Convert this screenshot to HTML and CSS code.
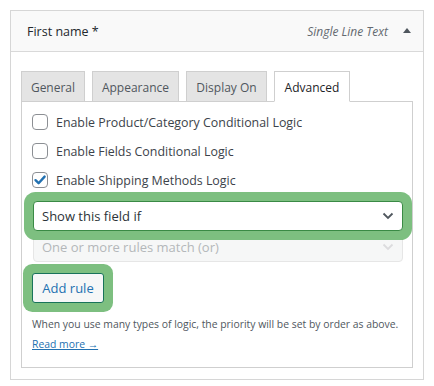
FILE: index.html
```html
<!DOCTYPE html>
<html>
<head>
<meta charset="utf-8">
<link rel="stylesheet" href="styles.css">
</head>
<body>
<div class="card">
  <div class="card-head">
    <span class="field-name">First name *</span>
    <span class="head-right">
      <span class="field-type">Single Line Text</span>
      <svg class="toggle" width="8" height="5" viewBox="0 0 8 5"><path d="M0 5 L4 0 L8 5 Z" fill="#50575e"/></svg>
    </span>
  </div>
  <div class="card-body">
    <div class="tabs">
      <div class="tab t1">General</div>
      <div class="tab t2">Appearance</div>
      <div class="tab t3">Display On</div>
      <div class="tab t4 active">Advanced</div>
    </div>
    <div class="panel">
      <label class="check-row"><span class="box"></span>Enable Product/Category Conditional Logic</label>
      <label class="check-row"><span class="box"></span>Enable Fields Conditional Logic</label>
      <label class="check-row"><span class="box checked"><svg width="14" height="14" viewBox="0 0 14 14"><path d="M2.5 7.2 L5.6 10.2 L11.6 3.6" fill="none" stroke="#2271b1" stroke-width="2.4" stroke-linecap="round" stroke-linejoin="round"/></svg></span>Enable Shipping Methods Logic</label>
      <div class="select highlight">
        <span>Show this field if</span>
        <svg width="12" height="8" viewBox="0 0 12 8"><path d="M1.5 1.5 L6 6 L10.5 1.5" fill="none" stroke="#50575e" stroke-width="1.8"/></svg>
      </div>
      <div class="select disabled">
        <span>One or more rules match (or)</span>
        <svg width="12" height="8" viewBox="0 0 12 8"><path d="M1.5 1.5 L6 6 L10.5 1.5" fill="none" stroke="#dcdcde" stroke-width="1.8"/></svg>
      </div>
      <div class="btn-row"><button class="btn highlight">Add rule</button></div>
      <p class="help">When you use many types of logic, the priority will be set by order as above.</p>
      <a class="more" href="#">Read more →</a>
    </div>
  </div>
</div>
</body>
</html>
```
FILE: styles.css
```css
* { box-sizing: border-box; }
body {
  margin: 0;
  background: #fff;
  font-family: "Open Sans", "Noto Sans", sans-serif;
  color: #3c434a;
}
.card {
  margin: 10px 0 0 10px;
  width: 414px;
  border: 1px solid #d6d6d6;
  background: #fff;
}
.card-head {
  height: 41px;
  background: #f9f9f9;
  border-bottom: 1px solid #d9d9d9;
  display: flex;
  align-items: center;
  justify-content: space-between;
  padding: 1px 12px 0 16px;
}
.field-name {
  font-size: 12.5px;
  color: #23282d;
}
.head-right {
  display: flex;
  align-items: center;
  gap: 15px;
}
.field-type {
  font-size: 12px;
  font-style: italic;
  color: #646970;
}
.toggle { margin-top: -2px; }
.card-body {
  padding: 19px 10px 11px 10px;
}
.tabs {
  display: flex;
  gap: 7px;
  position: relative;
  z-index: 1;
  margin-bottom: -1px;
}
.tab {
  height: 31px;
  border: 1px solid #cfcfcf;
  background: #e4e4e4;
  color: #50575e;
  font-size: 12px;
  display: flex;
  align-items: center;
  justify-content: center;
  padding: 2px 0 0 0;
}
.t1 { width: 64px; }
.t2 { width: 87px; }
.t3 { width: 81px; }
.t4 { width: 76px; }
.tab.active {
  background: #fff;
  color: #1d2327;
  border-bottom-color: #fff;
}
.panel {
  border: 1px solid #cfcfcf;
  padding: 12px 9px 14px 10px;
}
.check-row {
  display: flex;
  align-items: center;
  gap: 8px;
  height: 16px;
  margin-bottom: 13px;
  font-size: 12.4px;
  color: #3c434a;
}
.box {
  width: 16px;
  height: 16px;
  border: 1px solid #8c8f94;
  border-radius: 4px;
  background: #fff;
  display: flex;
  align-items: center;
  justify-content: center;
}
.select {
  height: 30px;
  margin-left: 1px;
  border: 1px solid #8c8f94;
  border-radius: 4px;
  display: flex;
  align-items: center;
  justify-content: space-between;
  padding: 0 8px 0 8px;
  font-size: 13px;
  color: #2c3338;
  background: #fff;
}
.select.highlight {
  margin-top: 12px;
  border-color: #3a8a45;
  position: relative;
  z-index: 2;
}
.highlight {
  box-shadow: 0 0 0 9px #7dbf80;
}
.select.disabled {
  margin-top: 1px;
  background: #f6f7f7;
  border-color: #e6e6e6;
  color: #b4b7ba;
}
.btn-row { margin-top: 11px; }
.btn {
  height: 30px;
  width: 72px;
  border: 1px solid #18735a;
  border-radius: 3px;
  background: #f6f7f7;
  color: #2271b1;
  font-family: inherit;
  font-size: 13px;
  padding: 0;
}
.help {
  margin: 14px 0 0 0;
  font-size: 10.4px;
  white-space: nowrap;
  color: #50575e;
}
.more {
  display: inline-block;
  margin-top: 2px;
  font-size: 10.4px;
  color: #2271b1;
}
```
